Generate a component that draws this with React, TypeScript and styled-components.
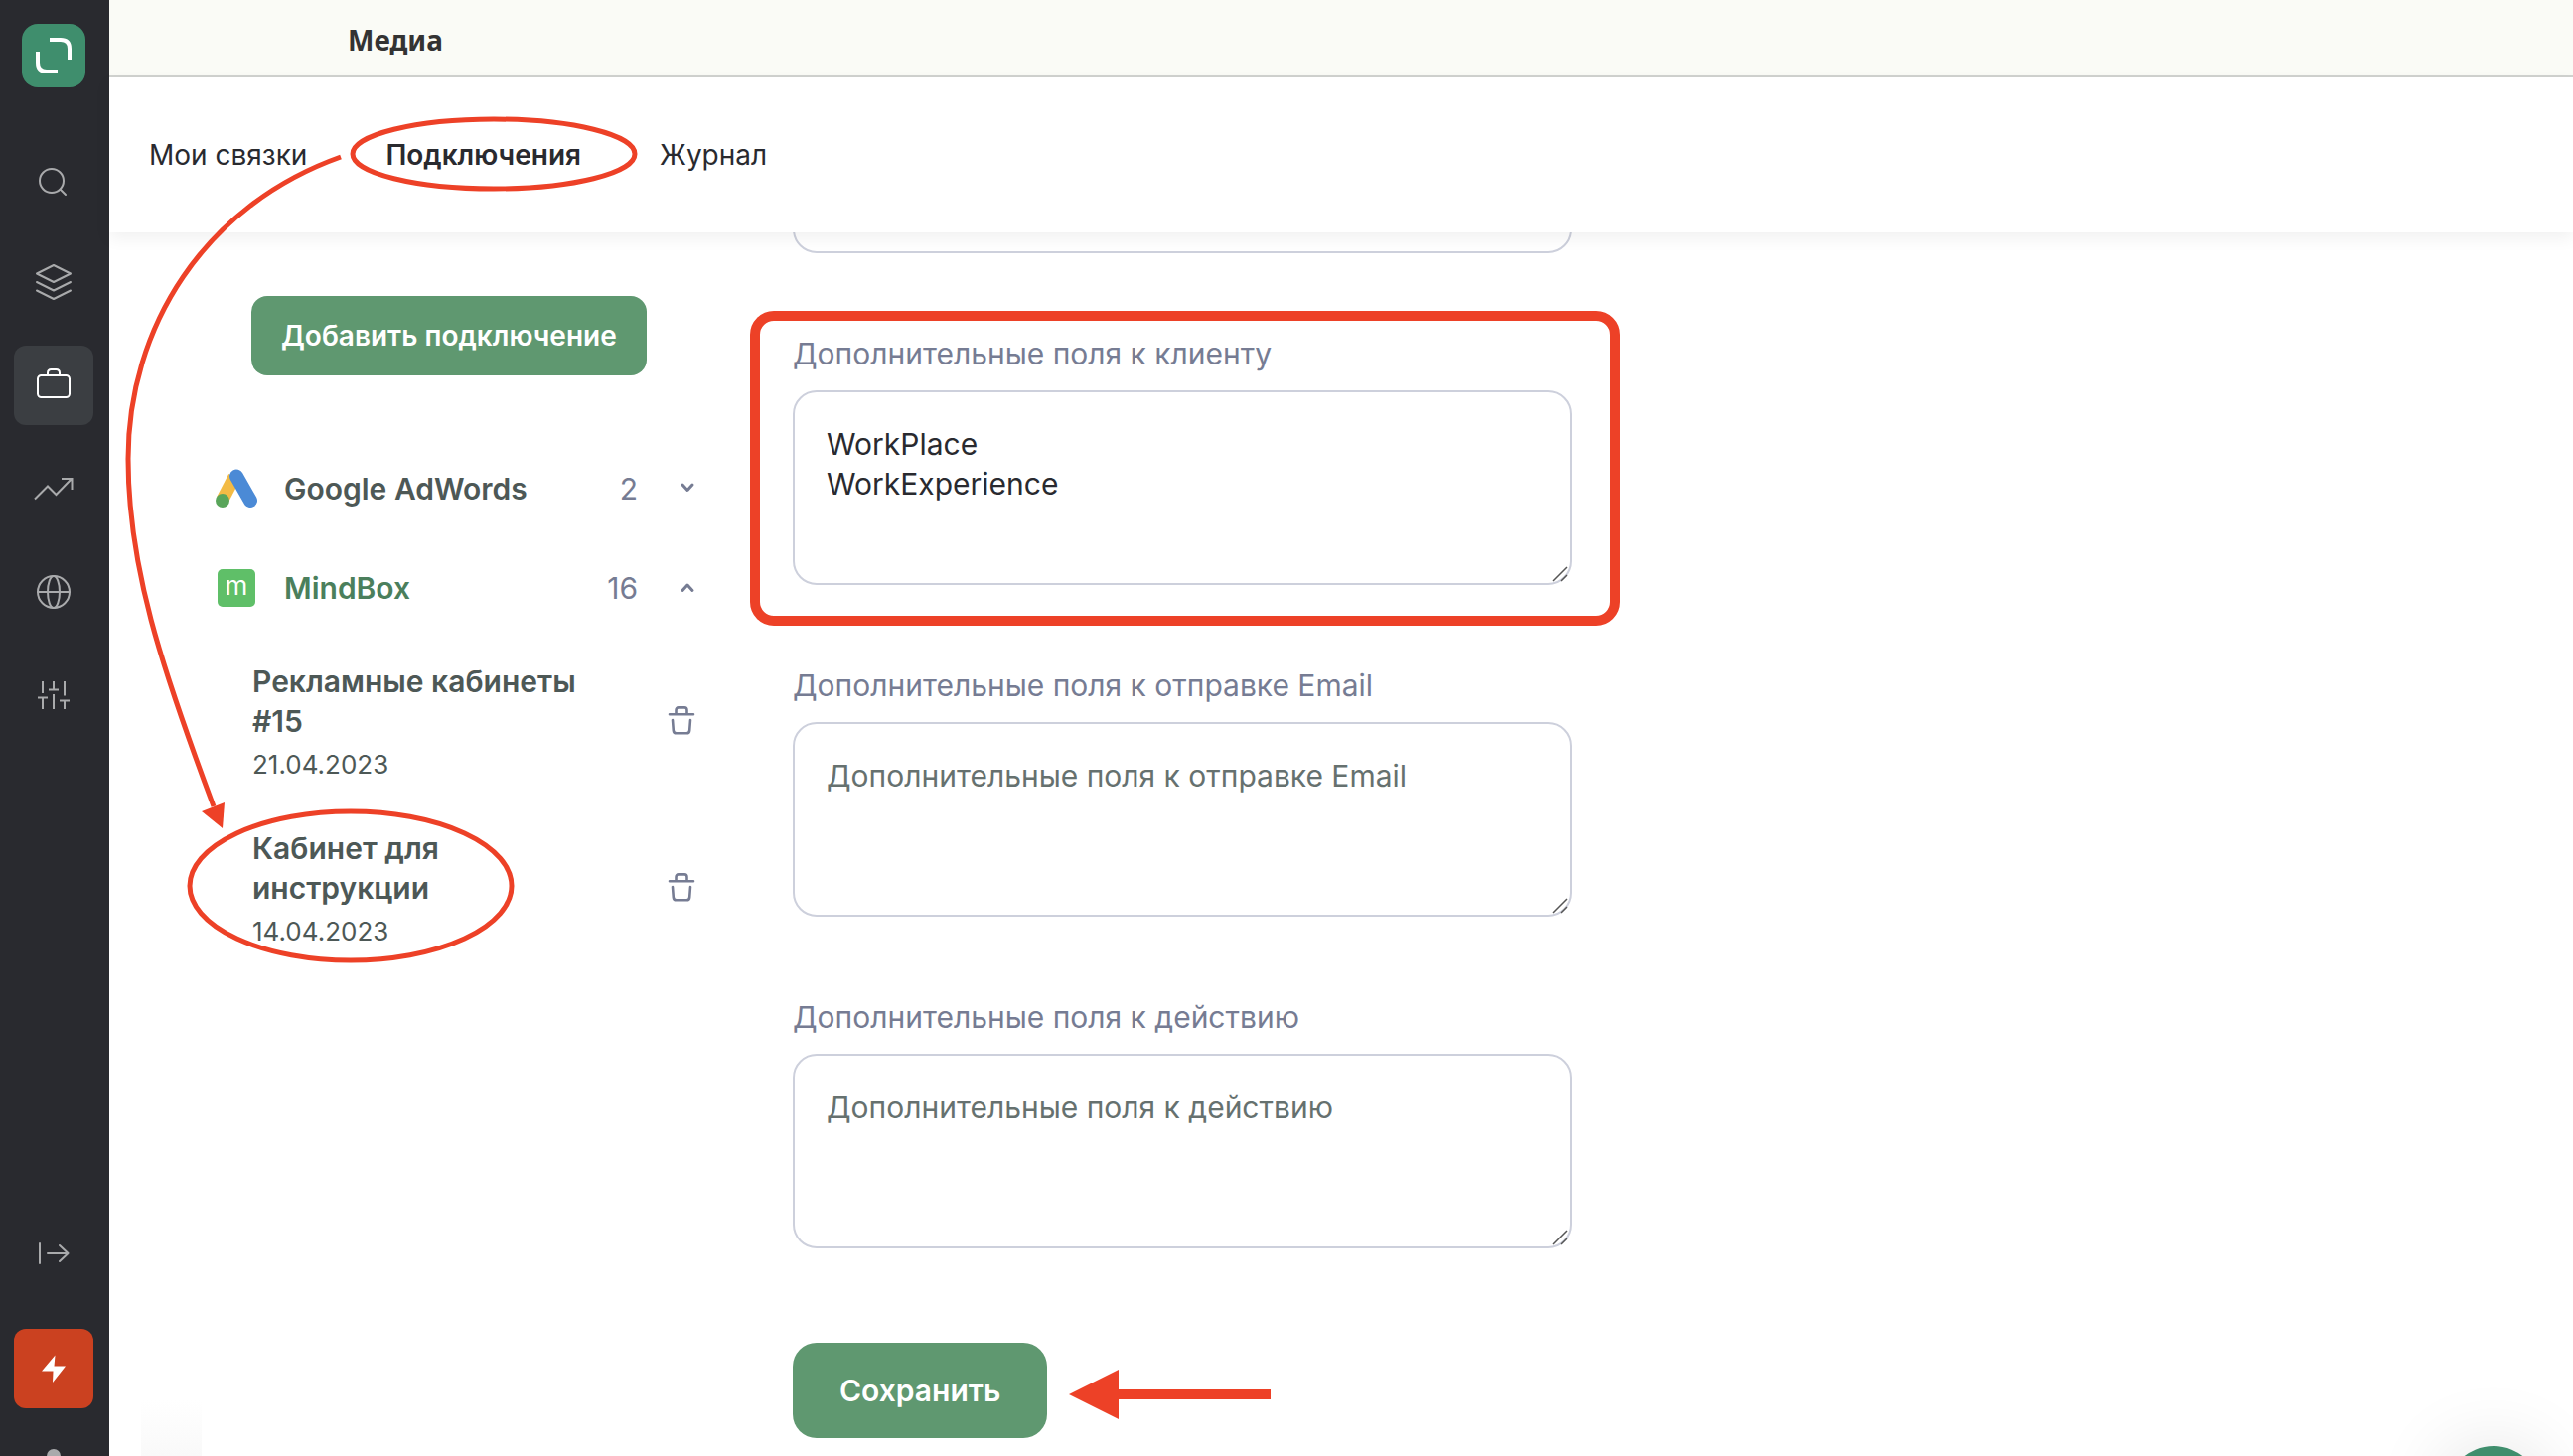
import React, { useState } from 'react';
import styled, { createGlobalStyle } from 'styled-components';

const color = {
  rail: '#292a2f',
  railActive: '#3b3e42',
  railIcon: '#a9aaac',
  brand: '#3f8e6d',
  green: '#5f9870',
  greenText: '#4b7f5c',
  alert: '#cb4120',
  mark: '#ed4127',
  ink: '#292a2f',
  body: '#4d5856',
  muted: '#767c93',
  hint: '#66716f',
  line: '#cdd0dc',
};

const GlobalStyle = createGlobalStyle`
  *, *::before, *::after { box-sizing: border-box; }
  body {
    margin: 0;
    background: #fff;
    color: ${color.ink};
    font-family: Inter, "Liberation Sans", sans-serif;
    -webkit-font-smoothing: antialiased;
  }
  button, textarea { font: inherit; }
  button { border: 0; padding: 0; cursor: pointer; }
  a { color: inherit; text-decoration: none; }
`;

const Page = styled.div`
  position: relative;
  display: flex;
  height: 100vh;
  overflow: hidden;
`;

const Rail = styled.nav`
  display: flex;
  flex-direction: column;
  flex: 0 0 110px;
  align-items: flex-start;
  padding: 24px 14px 0;
  background: ${color.rail};
`;

const Logo = styled.a`
  display: block;
  height: 64px;
  margin: 0 8px 52px;
`;

const RailGroup = styled.div<{ $gap: number; $bottom?: boolean }>`
  display: flex;
  flex-direction: column;
  gap: ${(p) => p.$gap}px;
  margin-top: ${(p) => (p.$bottom ? 'auto' : '0')};
  margin-bottom: ${(p) => (p.$bottom ? '-68px' : '0')};
`;

const RailButton = styled.button<{ $tone?: 'active' | 'alert' }>`
  display: flex;
  align-items: center;
  justify-content: center;
  width: 80px;
  height: 80px;
  border-radius: 12px;
  color: ${(p) => (p.$tone ? '#fff' : color.railIcon)};
  background: ${(p) =>
    p.$tone === 'active' ? color.railActive : p.$tone === 'alert' ? color.alert : 'transparent'};
`;

const Main = styled.main`
  display: flex;
  flex: 1;
  flex-direction: column;
  min-width: 0;
`;

const TopBar = styled.header`
  display: flex;
  align-items: center;
  height: 78px;
  padding: 4px 240px 0;
  border-bottom: 2px solid #d0d2cf;
  background: #fafbf6;
`;

const Title = styled.h1`
  margin: 0;
  color: #333;
  font: 700 28px/40px "Noto Sans", "Open Sans", sans-serif;
`;

const Tabs = styled.nav`
  z-index: 1;
  display: flex;
  flex: 0 0 156px;
  align-items: center;
  gap: 79px;
  padding: 0 40px;
  background: #fff;
  box-shadow: 0 6px 16px rgba(0, 0, 0, 0.06);
`;

const Tab = styled.a<{ $active?: boolean }>`
  font-size: 28px;
  line-height: 40px;
  font-weight: ${(p) => (p.$active ? 600 : 400)};
`;

const Content = styled.div`
  display: flex;
  flex: 1;
  gap: 98px;
  min-height: 0;
  padding: 0 104px;
  overflow: hidden;
`;

const Aside = styled.aside`
  flex: 0 0 486px;
  padding-top: 64px;
`;

const AddButton = styled.button`
  height: 80px;
  margin: 0 0 64px 39px;
  padding: 0 30px;
  border-radius: 16px;
  background: ${color.green};
  color: #fff;
  font-size: 28px;
  font-weight: 600;
`;

const Service = styled.button<{ $open?: boolean }>`
  display: flex;
  align-items: center;
  width: 100%;
  height: 100px;
  background: none;
  color: ${(p) => (p.$open ? color.greenText : color.body)};
  font-size: 30px;
  line-height: 40px;
  font-weight: 600;
  text-align: left;
`;

const ServiceIcon = styled.span`
  display: flex;
  justify-content: center;
  width: 48px;
  margin-right: 24px;
`;

const MindBoxLogo = styled.span`
  width: 38px;
  height: 38px;
  border-radius: 5px;
  background: #5fbf68;
  color: #fff;
  font-size: 26px;
  line-height: 34px;
  font-weight: 400;
  text-align: center;
`;

const Count = styled.span`
  margin: 0 42px 0 auto;
  color: ${color.muted};
  font-weight: 400;
`;

const Accounts = styled.ul`
  margin: 0;
  padding: 24px 0 0 40px;
  list-style: none;
`;

const Account = styled.li`
  display: flex;
  align-items: flex-start;
  justify-content: space-between;
  height: 168px;
`;

const AccountLink = styled.a`
  width: 340px;
  color: ${color.body};
`;

const AccountName = styled.strong`
  display: block;
  font-size: 30px;
  line-height: 40px;
  font-weight: 600;
`;

const AccountDate = styled.time`
  display: block;
  font-size: 26px;
  line-height: 48px;
`;

const TrashButton = styled.button`
  display: flex;
  margin-top: 44px;
  background: none;
  color: ${color.muted};
`;

const Form = styled.form`
  display: flex;
  flex: 0 1 784px;
  flex-direction: column;
  align-items: flex-start;
  gap: 81px;
  margin-top: -175px;
`;

const Field = styled.div`
  position: relative;
  display: flex;
  flex-direction: column;
  gap: 17px;
  width: 100%;
`;

const Label = styled.label`
  color: ${color.muted};
  font-size: 30px;
  line-height: 40px;
`;

const AreaBox = styled.div`
  position: relative;
  height: 196px;
`;

const Area = styled.textarea`
  display: block;
  width: 100%;
  height: 196px;
  padding: 32px;
  border: 2px solid ${color.line};
  border-radius: 24px;
  outline: 0;
  background: #fff;
  color: ${color.ink};
  font-size: 30px;
  line-height: 40px;
  resize: none;
  &::placeholder { color: ${color.hint}; opacity: 1; }
`;

const Grip = styled.svg`
  position: absolute;
  right: 4px;
  bottom: 3px;
  pointer-events: none;
`;

const Highlight = styled.div`
  position: absolute;
  inset: -23px -49px -41px -43px;
  border: 10px solid ${color.mark};
  border-radius: 24px;
  pointer-events: none;
`;

const SaveButton = styled.button`
  height: 96px;
  margin-top: 14px;
  padding: 0 47px;
  border-radius: 24px;
  background: ${color.green};
  color: #fff;
  font-size: 30px;
  font-weight: 600;
`;

const Markup = styled.svg`
  position: absolute;
  top: 0;
  left: 0;
  z-index: 2;
  pointer-events: none;
`;

const Fade = styled.div`
  position: absolute;
  bottom: 0;
  left: 142px;
  width: 61px;
  height: 56px;
  background: linear-gradient(#fff, #f9f9f9);
`;

const ChatButton = styled.button`
  position: absolute;
  right: 32px;
  bottom: -86px;
  width: 96px;
  height: 96px;
  border-radius: 50%;
  background: ${color.brand};
  box-shadow: 0 4px 80px rgba(0, 0, 0, 0.14);
`;

const Icon = ({ size = 40, width = 2, children }: { size?: number; width?: number; children: React.ReactNode }) => (
  <svg width={size} height={size} viewBox={`0 0 ${size} ${size}`} fill="none" stroke="currentColor"
    strokeWidth={width} strokeLinecap="round" strokeLinejoin="round" aria-hidden="true">
    {children}
  </svg>
);

const Chevron = ({ up }: { up?: boolean }) => (
  <svg width="16" height="16" viewBox="0 0 16 16" fill="none" stroke={color.muted} strokeWidth="3"
    strokeLinecap="round" strokeLinejoin="round" aria-hidden="true">
    <path d={up ? 'M3 10.5 8 5l5 5.5' : 'M3 4 8 9.5 13 4'} />
  </svg>
);

const Trash = () => (
  <svg width="28" height="30" viewBox="0 0 28 30" fill="none" stroke="currentColor" strokeWidth="2.6"
    strokeLinecap="round" strokeLinejoin="round" aria-hidden="true">
    <path d="M2 9.2h24M8.5 9V5q0-2.6 2.5-2.6h6q2.5 0 2.5 2.6v4M5 15l.8 10.5q.3 2.8 3 2.8h10.4q2.7 0 3-2.8L23 15" />
  </svg>
);

const railItems: { name: string; active?: boolean; icon: React.ReactNode }[] = [
  { name: 'Поиск', icon: <><circle cx="18" cy="22" r="12" /><path d="m27 31 5 5" /></> },
  { name: 'Слои', icon: <path d="M20 3 37 11.5 20 20 3 11.5ZM3 20l17 8.5L37 20M3 28.5 20 37l17-8.5" /> },
  { name: 'Проекты', active: true, icon: <><rect x="4" y="10" width="32" height="22" rx="3.5" /><path d="M14 10V7.5Q14 4 17.5 4h5Q26 4 26 7.5V10" /></> },
  { name: 'Аналитика', icon: <path strokeLinecap="butt" strokeLinejoin="miter" d="M1 30.5 14 17.5l8.5 8.5L38 10M28 10h10.500v11" /> },
  { name: 'Сайты', icon: <><circle cx="20" cy="20" r="16" /><ellipse cx="20" cy="20" rx="6" ry="16" /><path d="M4 20h32" /></> },
  { name: 'Настройки', icon: <path strokeLinecap="butt" d="M9 6v12M4 22.5h10M9 22.5V34M20 6v8.5M15 14.5h10M20 19v15M31 6v14.5M26 25.5h10M31 25.5V34" /> },
];

const accounts = [
  { name: 'Рекламные кабинеты #15', date: '21.04.2023', iso: '2023-04-21' },
  { name: 'Кабинет для инструкции', date: '14.04.2023', iso: '2023-04-14' },
];

const fields = [
  { id: 'order', label: '', value: '' },
  { id: 'client', label: 'Дополнительные поля к клиенту', value: 'WorkPlace\nWorkExperience', marked: true },
  { id: 'email', label: 'Дополнительные поля к отправке Email', value: '' },
  { id: 'action', label: 'Дополнительные поля к действию', value: '' },
];

export default function App() {
  const [values, setValues] = useState<Record<string, string>>(
    Object.fromEntries(fields.map((f) => [f.id, f.value])),
  );

  return (
    <>
      <GlobalStyle />
      <Page>
        <Rail>
          <Logo href="#" aria-label="Главная">
            <svg width="64" height="64" viewBox="0 0 64 64" fill="none" stroke="#fff" strokeWidth="4" aria-hidden="true">
              <rect width="64" height="64" rx="16" fill={color.brand} stroke="none" />
              <path d="M28 16h11q9 0 9 9v11M36 48H25q-9 0-9-9V28" />
            </svg>
          </Logo>
          <RailGroup $gap={24}>
            {railItems.map((item) => (
              <RailButton key={item.name} type="button" aria-label={item.name} $tone={item.active ? 'active' : undefined}>
                <Icon>{item.icon}</Icon>
              </RailButton>
            ))}
          </RailGroup>
          <RailGroup $gap={36} $bottom>
            <RailButton type="button" aria-label="Развернуть меню">
              <Icon><path d="M6 10v20M14 20h20M26 12l8.5 8L26 28" /></Icon>
            </RailButton>
            <RailButton type="button" aria-label="Быстрые действия" $tone="alert">
              <Icon><path d="M21.5 6.5 8 22.500h11.500L19 34 32 17.500H20.500Z" fill="#fff" stroke="none" /></Icon>
            </RailButton>
            <RailButton type="button" aria-label="Профиль">
              <Icon size={70}><circle cx="35" cy="7" r="7" fill="currentColor" stroke="none" /></Icon>
            </RailButton>
          </RailGroup>
        </Rail>

        <Main>
          <TopBar><Title>Медиа</Title></TopBar>
          <Tabs>
            <Tab href="#">Мои связки</Tab>
            <Tab href="#" $active aria-current="page">Подключения</Tab>
            <Tab href="#">Журнал</Tab>
          </Tabs>
          <Content>
            <Aside>
              <AddButton type="button">Добавить подключение</AddButton>
              <Service type="button" aria-expanded={false}>
                <ServiceIcon>
                  <svg width="44" height="40" viewBox="0 0 44 40" aria-hidden="true">
                    <path d="M20 8 8 31" stroke="#f3bb45" strokeWidth="13" />
                    <path d="M22 7.5 36 32" stroke="#4b8ad6" strokeWidth="14" strokeLinecap="round" />
                    <circle cx="8" cy="32" r="7" fill="#59a55a" />
                  </svg>
                </ServiceIcon>
                Google AdWords
                <Count>2</Count>
                <Chevron />
              </Service>
              <Service type="button" aria-expanded $open>
                <ServiceIcon><MindBoxLogo aria-hidden="true">m</MindBoxLogo></ServiceIcon>
                MindBox
                <Count>16</Count>
                <Chevron up />
              </Service>
              <Accounts>
                {accounts.map((a) => (
                  <Account key={a.iso}>
                    <AccountLink href="#">
                      <AccountName>{a.name}</AccountName>
                      <AccountDate dateTime={a.iso}>{a.date}</AccountDate>
                    </AccountLink>
                    <TrashButton type="button" aria-label={`Удалить: ${a.name}`}><Trash /></TrashButton>
                  </Account>
                ))}
              </Accounts>
            </Aside>

            <Form onSubmit={(e) => e.preventDefault()}>
              {fields.map((f) => (
                <Field key={f.id}>
                  {f.label && <Label htmlFor={f.id}>{f.label}</Label>}
                  <AreaBox>
                    <Area
                      id={f.id}
                      aria-label={f.label ? undefined : 'Дополнительные поля'}
                      placeholder={f.label}
                      spellCheck={false}
                      value={values[f.id]}
                      onChange={(e) => setValues({ ...values, [f.id]: e.target.value })}
                    />
                    {f.label && (
                      <Grip width="16" height="16" viewBox="0 0 16 16" fill="none" stroke="#555" strokeWidth="1.5" aria-hidden="true">
                        <path d="M1 15 15 1M9 15l6-6" />
                      </Grip>
                    )}
                  </AreaBox>
                  {f.marked && <Highlight />}
                </Field>
              ))}
              <SaveButton type="submit">Сохранить</SaveButton>
            </Form>
          </Content>
        </Main>

        <Fade />
        <ChatButton type="button" aria-label="Чат" />
        <Markup width="1300" height="1466" viewBox="0 0 1300 1466" fill="none" stroke={color.mark} strokeWidth="5" aria-hidden="true">
          <ellipse cx="497" cy="155" rx="142" ry="35" />
          <ellipse cx="353" cy="892" rx="162" ry="75" />
          <path d="M343 158C205 207 129 330 129 462C129 570 162 670 215 812" />
          <path d="M224 834 203 817 226 808Z" fill={color.mark} stroke="none" />
          <path d="M1076 1404 1126 1379V1399H1279V1409H1126V1429Z" fill={color.mark} stroke="none" />
        </Markup>
      </Page>
    </>
  );
}
